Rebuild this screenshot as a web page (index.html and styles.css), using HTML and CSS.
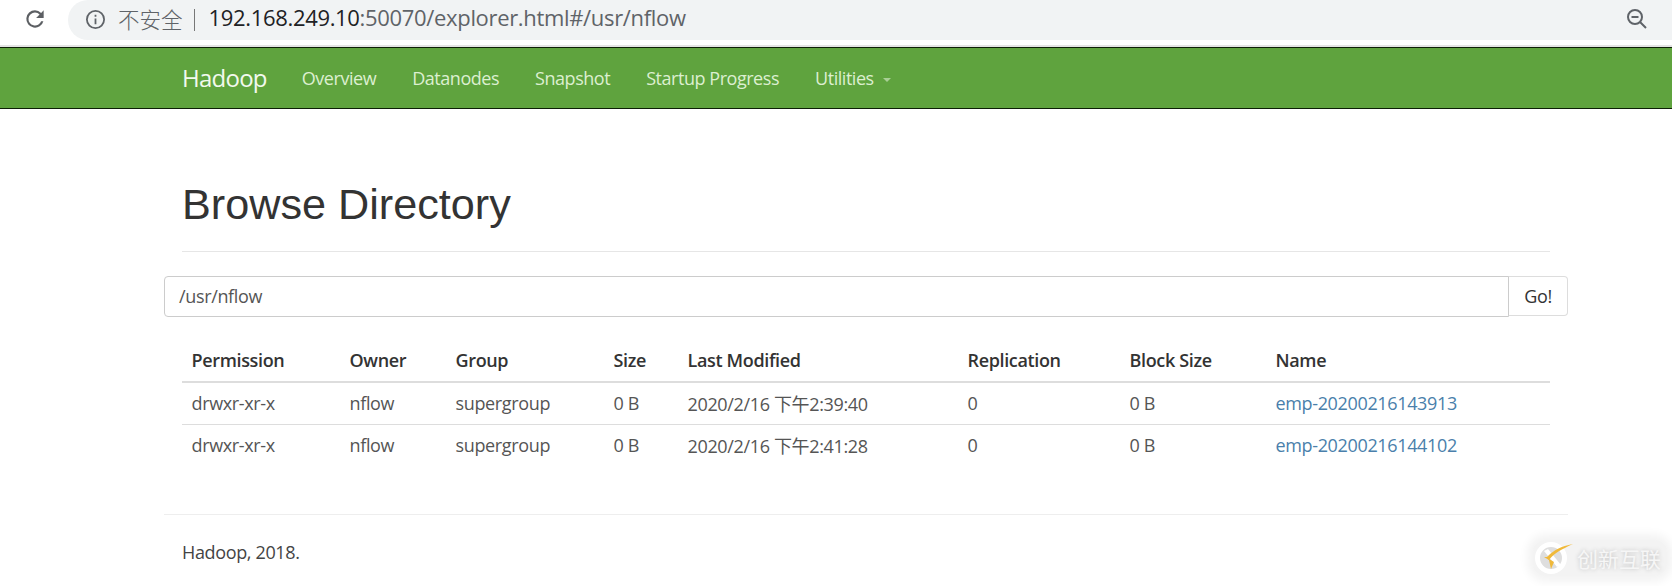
FILE: index.html
```html
<!DOCTYPE html>
<html lang="zh">
<head>
<meta charset="utf-8">
<title>Browsing HDFS</title>
<link rel="stylesheet" href="styles.css">
</head>
<body>
<div class="chrome">
  <svg class="reload" viewBox="0 0 24 24" width="26" height="26"><path d="M17.65 6.35A7.96 7.96 0 0 0 12 4a8 8 0 1 0 7.73 10h-2.08A6 6 0 1 1 12 6c1.66 0 3.14.69 4.22 1.78L13 11h7V4l-2.35 2.35z"/></svg>
  <div class="omnibox">
    <svg class="info" viewBox="0 0 20 20" width="21" height="21"><circle cx="10" cy="10" r="8.2"/><path d="M10 9v5.5M10 5.5v1.8"/></svg>
    <span class="insecure">不安全</span>
    <span class="sep"></span>
    <span class="url"><span class="host">192.168.249.10</span>:50070/explorer.html#/usr/nflow</span>
    <svg class="zoom" viewBox="0 0 22 22" width="22" height="22"><circle cx="9" cy="9" r="7"/><path d="M5.5 9h7M14 14l6 6"/></svg>
  </div>
</div>
<nav class="navbar">
  <a class="brand">Hadoop</a>
  <a class="nav-link">Overview</a>
  <a class="nav-link">Datanodes</a>
  <a class="nav-link">Snapshot</a>
  <a class="nav-link">Startup Progress</a>
  <a class="nav-link">Utilities<i class="caret"></i></a>
</nav>
<main class="container">
  <div class="page-header"><h1>Browse Directory</h1></div>
  <div class="input-group">
    <div class="path-input">/usr/nflow</div>
    <div class="go">Go!</div>
  </div>
  <table class="listing">
    <colgroup>
      <col class="c1"><col class="c2"><col class="c3"><col class="c4"><col class="c5"><col class="c6"><col class="c7"><col class="c8">
    </colgroup>
    <thead>
      <tr><th>Permission</th><th>Owner</th><th>Group</th><th>Size</th><th>Last Modified</th><th>Replication</th><th>Block Size</th><th>Name</th></tr>
    </thead>
    <tbody>
      <tr><td>drwxr-xr-x</td><td>nflow</td><td>supergroup</td><td>0 B</td><td>2020/2/16 下午2:39:40</td><td>0</td><td>0 B</td><td><a class="link">emp-20200216143913</a></td></tr>
      <tr><td>drwxr-xr-x</td><td>nflow</td><td>supergroup</td><td>0 B</td><td>2020/2/16 下午2:41:28</td><td>0</td><td>0 B</td><td><a class="link">emp-20200216144102</a></td></tr>
    </tbody>
  </table>
  <footer class="footer">Hadoop, 2018.</footer>
</main>
<div class="watermark">
  <svg viewBox="0 0 40 36" width="40" height="36"><circle cx="18" cy="18" r="13.5" class="wm-ring"/><path class="wm-x" d="M11 11l4-2 13 16-4 2z"/><path class="wm-check" d="M11 17l5 3c5-7 13-11 24-16-12 2-20 7-24 11l-2 2z"/><path class="wm-check" d="M16 20l-3-3 8 5-3 7z"/></svg>
  <span>创新互联</span>
</div>
</body>
</html>
```
FILE: styles.css
```css
* { box-sizing: border-box; }
html, body { margin: 0; padding: 0; }
body {
  width: 1672px;
  height: 586px;
  overflow: hidden;
  background: #fff;
  color: #333;
  font-family: "Open Sans", "Noto Sans CJK SC", sans-serif;
  font-size: 18px;
  position: relative;
}
.chrome {
  height: 47px;
  display: flex;
  padding-bottom: 5px;
  background: #fff;
  border-bottom: 2px solid #e4e4e4;
}
.reload {
  margin: 6px 0 0 22px;
  width: 26px;
  height: 26px;
  fill: #5c5f63;
}
.omnibox {
  margin-left: 20px;
  flex: 1;
  height: 40px;
  background: #f1f3f4;
  border-radius: 20px 0 0 20px;
  display: flex;
  align-items: center;
  padding-left: 17px;
  padding-bottom: 1px;
}
.info { fill: none; stroke: #5f6368; stroke-width: 1.7; }
.insecure { margin-left: 12px; font-size: 21.5px; color: #5f6368; font-family: "Noto Sans CJK SC", sans-serif; font-weight: 300; line-height: 30px; margin-bottom: 2px; }
.sep { width: 1px; height: 22px; background: #777; margin: 0 14px 0 11px; }
.url { font-size: 22px; color: #5f6368; letter-spacing: -0.33px; line-height: 30px; margin-bottom: 5px; }
.host { color: #202124; }
.zoom { margin-left: auto; margin-right: 24px; margin-bottom: 2px; fill: none; stroke: #5f6368; stroke-width: 2; }
.navbar {
  height: 62px;
  background: #5fa33e;
  border-top: 1px solid #0d1f06;
  border-bottom: 1px solid #0d1f06;
  display: flex;
  align-items: center;
  padding-left: 182px;
  padding-bottom: 1px;
  color: #dcefd0;
}
.brand { font-size: 24px; color: #f2f9ee; margin-right: 35px; letter-spacing: -0.75px; }
.nav-link { font-size: 18px; margin-right: 36px; letter-spacing: -0.46px; }
.caret {
  display: inline-block;
  margin-left: 9px;
  vertical-align: middle;
  border-top: 4px solid #a9cf95;
  border-left: 4px solid transparent;
  border-right: 4px solid transparent;
}
.container { width: 1404px; margin-left: 164px; }
.page-header {
  margin: 0 18px;
  height: 143px;
  padding-top: 70px;
  border-bottom: 1px solid #e6e6e6;
}
h1 {
  margin: 0;
  font-family: "Liberation Sans", Arial, sans-serif;
  font-weight: 400;
  font-size: 43.2px;
  line-height: 50px;
  color: #333;
}
.input-group { display: flex; margin-top: 24px; height: 41px; }
.path-input {
  flex: 1;
  border: 1px solid #ccc;
  border-radius: 4px 0 0 4px;
  padding: 0 14px;
  line-height: 39px;
  color: #555;
  letter-spacing: -0.35px;
}
.go {
  width: 60px;
  height: 40px;
  border: 1px solid #ddd;
  border-left: 1px solid #ccc;
  border-radius: 0 4px 4px 0;
  margin-left: -1px;
  text-align: center;
  line-height: 38px;
  color: #333;
  letter-spacing: -0.35px;
}
.listing {
  margin: 21px 18px 0;
  width: 1368px;
  border-collapse: collapse;
  table-layout: fixed;
  letter-spacing: -0.35px;
}
.c1 { width: 158px; }
.c2 { width: 106px; }
.c3 { width: 158px; }
.c4 { width: 74px; }
.c5 { width: 280px; }
.c6 { width: 162px; }
.c7 { width: 146px; }
.c8 { width: 284px; }
th, td { text-align: left; padding: 0 10px 0 9.5px; font-size: 18px; white-space: nowrap; }
th { height: 44px; font-weight: 600; color: #333; border-bottom: 2px solid #ddd; }
td { height: 42px; color: #555; border-top: 1px solid #ddd; padding-bottom: 1px; }
tbody tr:first-child td { border-top: 0; height: 42px; padding-top: 0; padding-bottom: 0; }
.link { color: #4a7fab; }
.footer {
  margin-top: 48px;
  border-top: 1px solid #eee;
  height: 72px;
  padding: 25px 18px 0;
  font-size: 18px;
  color: #444;
  letter-spacing: -0.35px;
}
.watermark {
  position: absolute;
  left: 1533px;
  top: 540px;
  width: 134px;
  height: 36px;
  display: flex;
  align-items: center;
  gap: 4px;
  color: #f6f6f6;
  text-shadow: 0 0 4px #bdbdbd;
  font-family: "Noto Sans CJK SC", sans-serif;
  font-size: 21px;
  line-height: 36px;
  background: #f3f3f3;
  box-shadow: 0 0 10px 6px #f3f3f3;
  border-radius: 14px;
}
.wm-ring { fill: #dedede; stroke: #fff; stroke-width: 5; }
.wm-x { fill: #fff; }
.wm-check { fill: #f0b93a; }
```
